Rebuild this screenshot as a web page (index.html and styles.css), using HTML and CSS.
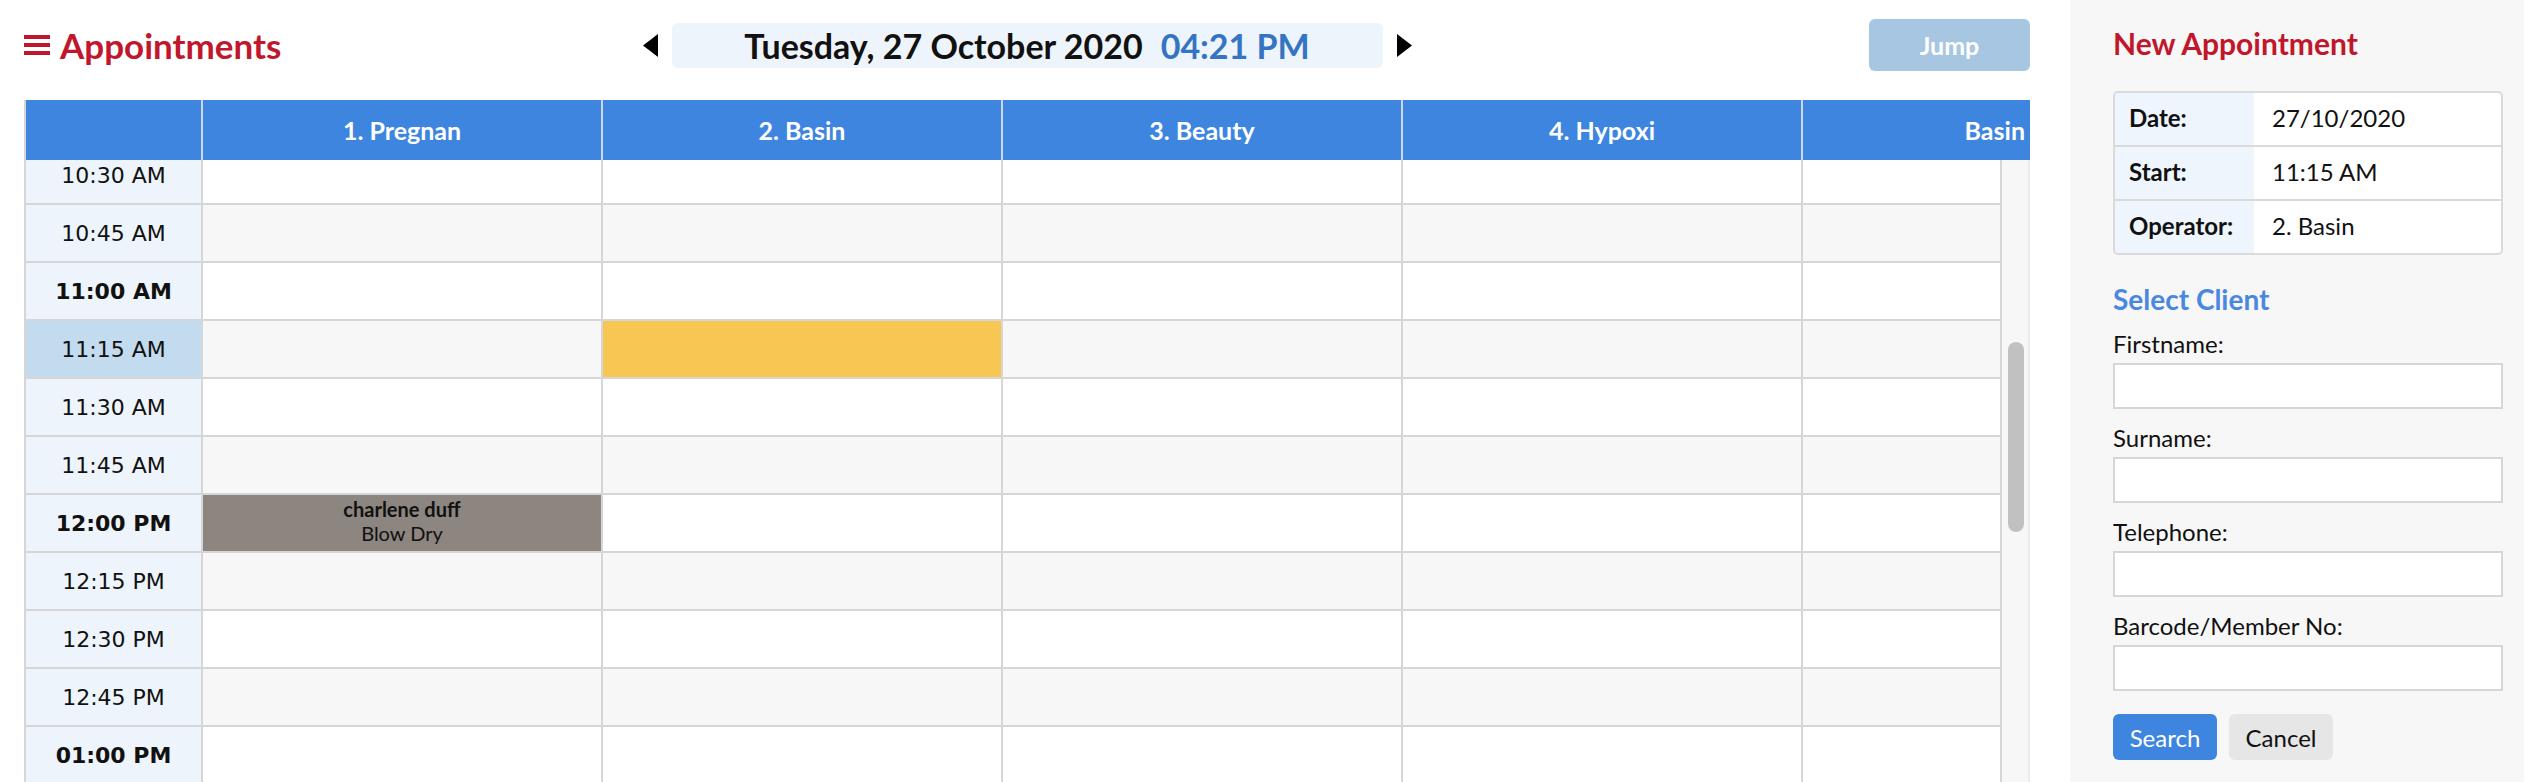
FILE: index.html
```html
<!DOCTYPE html>
<html lang="en">

<head>
    <meta charset="UTF-8">
    <meta name="viewport" content="width=device-width, initial-scale=1.0">
    <title>Appointments</title>

    <link rel="stylesheet" href="styles.css">
</head>

<body>
    <div class="app">
        <main class="planner">
            <div class="topbar">
                <h1 class="page-title">
                    <svg class="menu-icon" width="26" height="20" viewBox="0 0 26 20">
                        <rect y="0" width="26" height="4"></rect>
                        <rect y="8" width="26" height="4"></rect>
                        <rect y="16" width="26" height="4"></rect>
                    </svg>
                    <span>Appointments</span>
                </h1>

                <div class="day-nav">
                    <button class="day-arrow" type="button">
                        <svg width="15" height="23" viewBox="0 0 15 23"><polygon points="15,0 15,23 0,11.5"></polygon></svg>
                    </button>
                    <div class="day-box">
                        <span class="day-date">Tuesday, 27 October 2020</span>
                        <span class="day-time">04:21 PM</span>
                    </div>
                    <button class="day-arrow" type="button">
                        <svg width="15" height="23" viewBox="0 0 15 23"><polygon points="0,0 0,23 15,11.5"></polygon></svg>
                    </button>
                </div>

                <button class="jump-btn" type="button">Jump</button>
            </div>

            <div class="schedule">
                <div class="schedule-head">
                    <div class="head-cell"></div>
                    <div class="head-cell">1. Pregnan</div>
                    <div class="head-cell">2. Basin</div>
                    <div class="head-cell">3. Beauty</div>
                    <div class="head-cell">4. Hypoxi</div>
                    <div class="head-cell head-last">Basin</div>
                </div>
                <div class="schedule-body">
                    <div class="slots" id="slots"></div>
                    <div class="scroll-track" id="track">
                        <div class="scroll-thumb" id="thumb"></div>
                    </div>
                </div>
            </div>
        </main>

        <aside class="side-panel">
            <h2 class="panel-title">New Appointment</h2>

            <dl class="appt-info">
                <dt>Date:</dt>
                <dd>27/10/2020</dd>
                <dt>Start:</dt>
                <dd>11:15 AM</dd>
                <dt>Operator:</dt>
                <dd>2. Basin</dd>
            </dl>

            <h3 class="panel-subtitle">Select Client</h3>

            <form class="client-form" name="clientForm" onsubmit="return false">
                <label class="form-field">Firstname:<input type="text" name="firstname"></label>
                <label class="form-field">Surname:<input type="text" name="surname"></label>
                <label class="form-field">Telephone:<input type="tel" name="telephone"></label>
                <label class="form-field">Barcode/Member No:<input type="text" name="barcode"></label>

                <div class="form-actions">
                    <button class="btn btn-primary" type="submit">Search</button>
                    <button class="btn btn-secondary" type="button">Cancel</button>
                </div>
            </form>
        </aside>
    </div>

    <script>
        const staffCount = 5;
        const rowHeight = 58;
        const dayStart = 8 * 60;      // 08:00 AM
        const dayEnd = 16 * 60 + 30;  // 04:30 PM
        const viewFrom = 10 * 60 + 30; // first slot drawn
        const viewTo = 13 * 60;        // last slot drawn
        const bookings = {
            '12:00 PM': { col: 1, name: 'charlene duff', service: 'Blow Dry' }
        };
        const picked = { time: '11:15 AM', col: 2 };

        function pad(n) {
            return n < 10 ? '0' + n : '' + n;
        }

        let slots = document.getElementById('slots');
        let html = '';

        for (let mins = viewFrom; mins <= viewTo; mins += 15) {
            let h = Math.floor(mins / 60);
            let m = mins % 60;
            let label = pad(h % 12 || 12) + ':' + pad(m) + (h < 12 ? ' AM' : ' PM');
            let index = (mins - dayStart) / 15;

            let timeClass = 'slot slot-time';
            if (m === 0) timeClass += ' is-hour';
            if (label === picked.time) timeClass += ' is-current';

            html += '<div class="slot-row' + (index % 2 ? ' is-alt' : '') + '">';
            html += '<div class="' + timeClass + '">' + label + '</div>';
            for (let col = 1; col <= staffCount; col++) {
                let b = bookings[label];
                if (b && b.col === col) {
                    html += '<div class="slot slot-booked"><strong>' + b.name + '</strong>' + b.service + '</div>';
                } else if (label === picked.time && col === picked.col) {
                    html += '<div class="slot slot-picked"></div>';
                } else {
                    html += '<div class="slot"></div>';
                }
            }
            html += '</div>';
        }
        slots.innerHTML = html;

        // scrolled a little past 10:30
        let partial = 13;
        slots.scrollTop = partial;

        // scrollbar stands for the whole day, not only the rows drawn
        let track = document.getElementById('track');
        let thumb = document.getElementById('thumb');
        let trackH = track.clientHeight;
        let dayH = ((dayEnd - dayStart) / 15 + 1) * rowHeight;
        let offset = (viewFrom - dayStart) / 15 * rowHeight + partial;
        let thumbH = trackH * slots.clientHeight / dayH;
        thumb.style.height = thumbH + 'px';
        thumb.style.marginTop = offset / (dayH - slots.clientHeight) * (trackH - thumbH) + 'px';
    </script>
</body>

</html>
```

FILE: styles.css
```css
* {
    box-sizing: border-box;
}

html,
body {
    margin: 0;
    height: 100%;
}

body {
    font-family: Lato, "Liberation Sans", sans-serif;
    color: #111;
    background-color: #fff;
    overflow: hidden;
}

.app {
    display: flex;
    height: 100vh;
}

/* left side: day planner */
.planner {
    flex: 1;
    min-width: 0;
    display: flex;
    flex-direction: column;
    padding: 19px 40px 0 24px;
}

.topbar {
    display: grid;
    grid-template-columns: 1fr auto 1fr;
    align-items: center;
    height: 52px;
    margin-bottom: 29px;
}

.page-title {
    margin: 0;
    display: flex;
    align-items: center;
    gap: 10px;
    font-size: 35px;
    font-weight: 700;
    line-height: 1;
    color: #c1172c;
}

.menu-icon {
    fill: currentColor;
}

.day-nav {
    display: flex;
    align-items: center;
    gap: 14px;
}

.day-arrow {
    display: flex;
    padding: 0;
    border: none;
    background: none;
    cursor: pointer;
}

.day-box {
    width: 711px;
    height: 45px;
    display: flex;
    align-items: center;
    justify-content: center;
    background-color: #edf4fb;
    border-radius: 6px;
    font-size: 34px;
    font-weight: 700;
}

.day-time {
    margin-left: 18px;
    color: #3474c2;
}

.jump-btn {
    justify-self: end;
    width: 161px;
    height: 52px;
    border: none;
    border-radius: 6px;
    background-color: #a6c6e2;
    color: #fff;
    font-family: Lato, sans-serif;
    font-size: 25px;
    font-weight: 700;
}

.schedule {
    flex: 1;
    min-height: 0;
    display: flex;
    flex-direction: column;
    border-left: 2px solid #d6d6d6;
}

.schedule-head {
    display: grid;
    grid-template-columns: 177px repeat(4, 400px) 1fr;
    height: 60px;
    background-color: #3e85e0;
    color: #fff;
    font-size: 25px;
    font-weight: 700;
}

.head-cell {
    display: flex;
    align-items: center;
    justify-content: center;
    border-right: 2px solid #cfd6df;
}

.head-last {
    justify-content: flex-end;
    padding-right: 5px;
    border-right: none;
}

.schedule-body {
    flex: 1;
    min-height: 0;
    display: flex;
}

.slots {
    flex: 1;
    overflow: hidden;
}

.slot-row {
    display: grid;
    grid-template-columns: 177px repeat(5, 400px);
    height: 58px;
}

.slot-row.is-alt {
    background-color: #f7f7f7;
}

.slot {
    border-right: 2px solid #d6d6d6;
    border-bottom: 2px solid #d6d6d6;
}

.slot-time {
    display: flex;
    align-items: center;
    justify-content: center;
    background-color: #edf4fb;
    font-family: "DejaVu Sans", sans-serif;
    font-size: 22px;
}

.slot-time.is-hour {
    font-weight: 700;
}

.slot-time.is-current {
    background-color: #c3dbee;
}

.slot-picked {
    background-color: #f7c653;
}

.slot-booked {
    background-color: #8d8580;
    padding-top: 2px;
    text-align: center;
    font-size: 20px;
    line-height: 24px;
}

.slot-booked strong {
    display: block;
}

.scroll-track {
    width: 30px;
    padding: 0 4px 0 6px;
    background-color: #f7f7f7;
    border-left: 2px solid #d6d6d6;
    border-right: 2px solid #ebebeb;
}

.scroll-thumb {
    width: 16px;
    border-radius: 8px;
    background-color: #c1c1c1;
}

/* right side: new appointment */
.side-panel {
    flex: none;
    width: 454px;
    padding: 25px 21px 0 43px;
    background-color: #f7f7f7;
}

.panel-title {
    margin: 0;
    font-size: 30px;
    line-height: 36px;
    color: #c1172c;
}

.appt-info {
    display: grid;
    grid-template-columns: 139px 1fr;
    margin: 30px 0 0;
    background-color: #fff;
    border: 2px solid #dadada;
    border-radius: 5px;
    overflow: hidden;
    font-size: 24px;
}

.appt-info dt,
.appt-info dd {
    display: flex;
    align-items: center;
    height: 54px;
    margin: 0;
    padding-bottom: 3px;
    border-top: 2px solid #dadada;
}

.appt-info dt:first-of-type,
.appt-info dd:first-of-type {
    height: 52px;
    border-top: none;
}

.appt-info dt {
    padding-left: 14px;
    background-color: #eef5fc;
    font-weight: 700;
}

.appt-info dd {
    padding-left: 18px;
}

.panel-subtitle {
    margin: 28px 0 0;
    font-size: 28px;
    line-height: 32px;
    color: #4a88df;
}

.client-form {
    margin-top: 14px;
}

.form-field {
    display: flex;
    flex-direction: column;
    gap: 5px;
    margin-bottom: 14px;
    font-size: 24px;
    line-height: 29px;
}

.form-field input {
    height: 46px;
    padding: 0 10px;
    border: 2px solid #d6d6d6;
    background-color: #fff;
    font: inherit;
}

.form-actions {
    display: flex;
    gap: 12px;
    margin-top: 23px;
}

.btn {
    width: 104px;
    height: 46px;
    border: none;
    border-radius: 6px;
    font-family: Lato, sans-serif;
    font-size: 24px;
    cursor: pointer;
}

.btn-primary {
    background-color: #3e85e0;
    color: #fff;
}

.btn-secondary {
    background-color: #e6e6e6;
    color: #111;
}
```
